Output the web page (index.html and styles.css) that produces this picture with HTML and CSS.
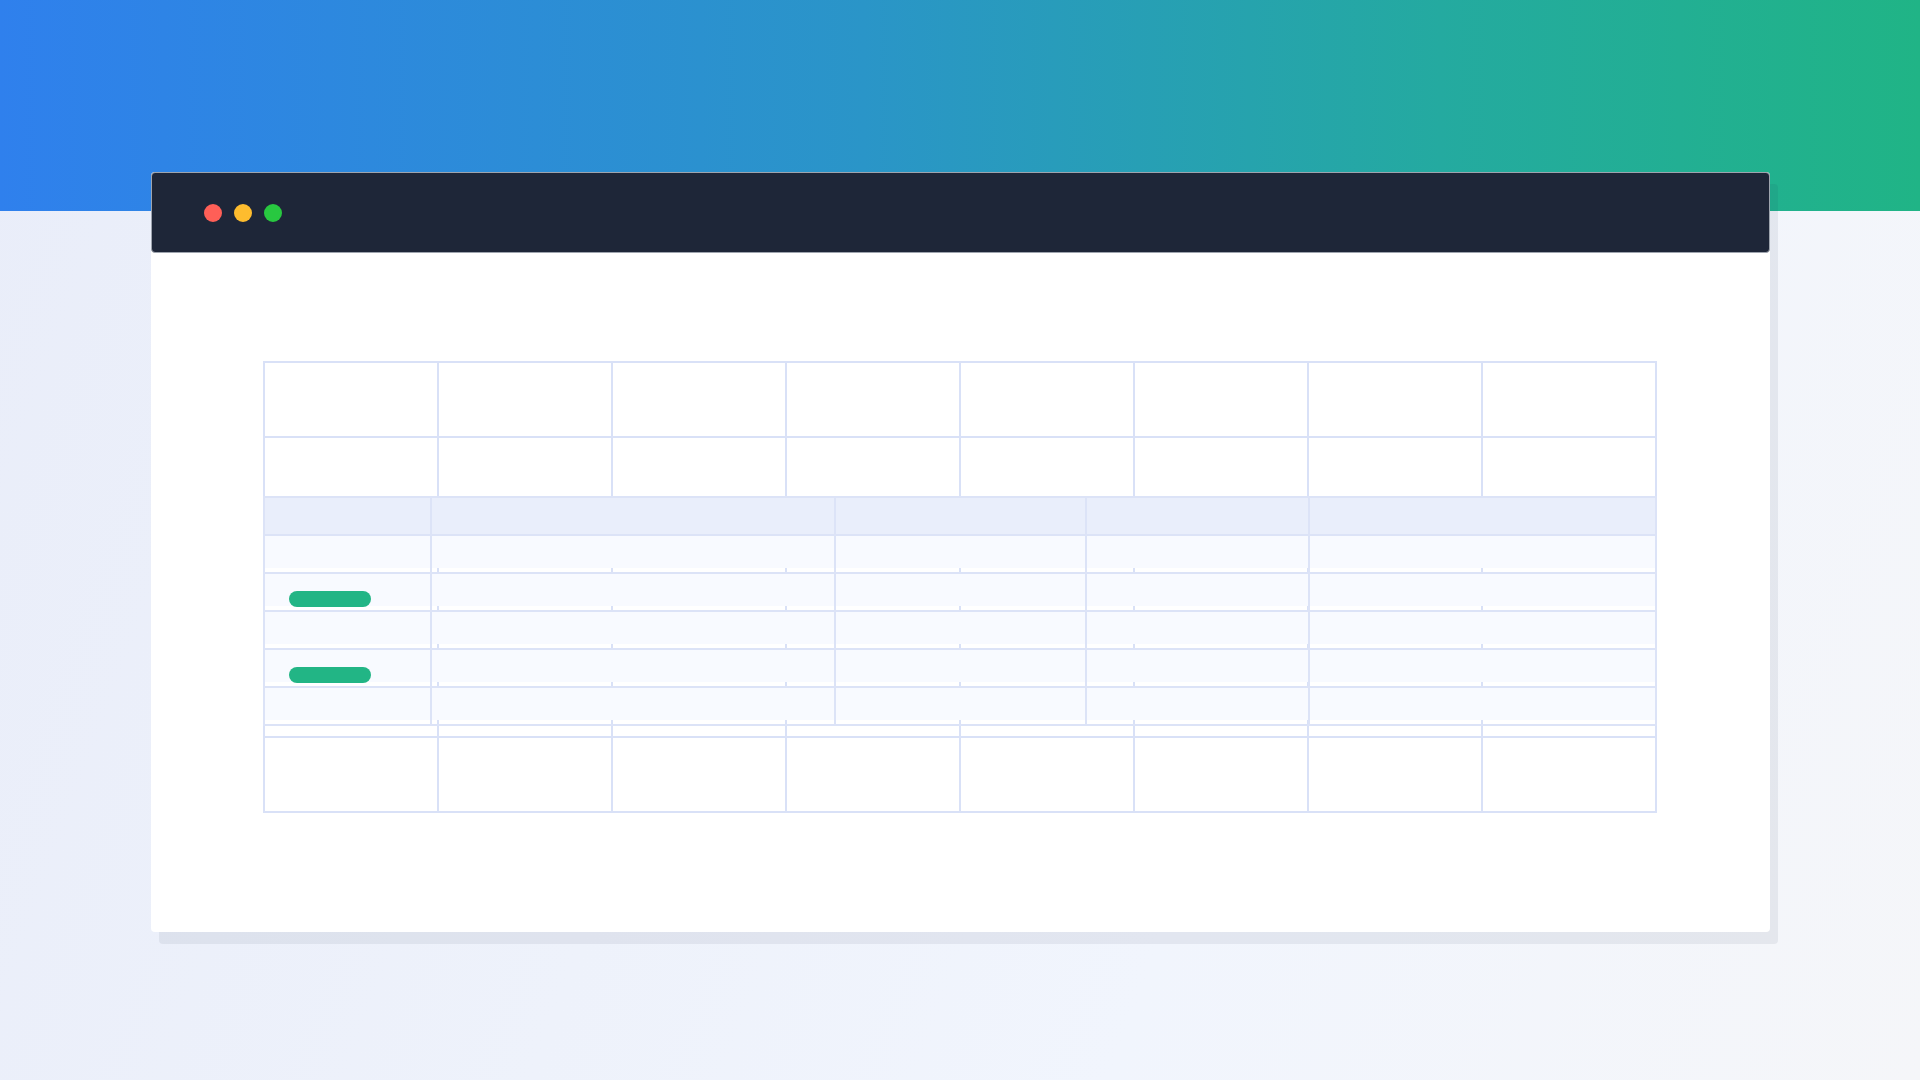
FILE: index.html
```html
<!DOCTYPE html>
<html lang="en">
<head>
    <meta charset="UTF-8">
    <meta name="viewport" content="width=device-width, initial-scale=1.0">
    <title>Sheet preview</title>
    <link rel="stylesheet" href="styles.css">
</head>
<body>
    <div class="stage">
        <div class="window">
            <div class="titlebar">
                <span class="dot dot-red"></span>
                <span class="dot dot-yellow"></span>
                <span class="dot dot-green"></span>
            </div>
            <div class="content">
                <div class="sheet">
                    <table class="grid">
                        <tbody>
                            <tr class="row-tall"><td></td><td></td><td></td><td></td><td></td><td></td><td></td><td></td></tr>
                            <tr><td></td><td></td><td></td><td></td><td></td><td></td><td></td><td></td></tr>
                            <tr><td></td><td></td><td></td><td></td><td></td><td></td><td></td><td></td></tr>
                            <tr><td></td><td></td><td></td><td></td><td></td><td></td><td></td><td></td></tr>
                            <tr><td></td><td></td><td></td><td></td><td></td><td></td><td></td><td></td></tr>
                            <tr><td></td><td></td><td></td><td></td><td></td><td></td><td></td><td></td></tr>
                            <tr class="row-tall"><td></td><td></td><td></td><td></td><td></td><td></td><td></td><td></td></tr>
                        </tbody>
                    </table>

                    <table class="overlay">
                        <colgroup>
                            <col class="col-a">
                            <col class="col-b">
                            <col class="col-c">
                            <col class="col-d">
                            <col class="col-e">
                        </colgroup>
                        <thead>
                            <tr><th></th><th></th><th></th><th></th><th></th></tr>
                        </thead>
                        <tbody>
                            <tr><td></td><td></td><td></td><td></td><td></td></tr>
                            <tr><td><span class="pill"></span></td><td></td><td></td><td></td><td></td></tr>
                            <tr><td></td><td></td><td></td><td></td><td></td></tr>
                            <tr><td><span class="pill"></span></td><td></td><td></td><td></td><td></td></tr>
                            <tr><td></td><td></td><td></td><td></td><td></td></tr>
                        </tbody>
                    </table>
                </div>
            </div>
        </div>
    </div>
</body>
</html>
```

FILE: styles.css
```css
html, body {
    margin: 0;
    padding: 0;
}
body {
    width: 1920px;
    height: 1080px;
    overflow: hidden;
    font-family: "Liberation Sans", Arial, sans-serif;
    background:
        linear-gradient(90deg, #2f80ed 0%, #2a95c8 45%, #24aaa0 75%, #20b486 100%) top left / 100% 211px no-repeat,
        linear-gradient(110deg, #e9edf9 0%, #eef2fb 40%, #f1f5fd 65%, #f5f6f9 100%);
}
.stage {
    padding: 172px 0 0 151px;
}
.window {
    width: 1619px;
    height: 760px;
    background-color: #ffffff;
    border-radius: 4px;
    box-shadow: 8px 12px 0 rgba(30, 41, 70, 0.07);
    display: flex;
    flex-direction: column;
}
.titlebar {
    box-sizing: border-box;
    height: 81px;
    background-color: #1e2638;
    border: 1px solid #9ea4ae;
    border-radius: 4px;
    display: flex;
    align-items: center;
    gap: 12px;
    padding-left: 52px;
}
.dot {
    width: 18px;
    height: 18px;
    border-radius: 50%;
}
.dot-red {
    background-color: #ff5f57;
}
.dot-yellow {
    background-color: #febc2e;
}
.dot-green {
    background-color: #28c840;
}
.content {
    padding: 108px 0 0 112px;
}
.sheet {
    position: relative;
    width: 1394px;
}
.grid {
    width: 1394px;
    table-layout: fixed;
    border-collapse: collapse;
    border: 2px solid #d9e1f7;
}
.grid td {
    border: 2px solid #d9e1f7;
    height: 58px;
    padding: 0;
}
.grid .row-tall td {
    height: 73px;
}
.overlay {
    position: absolute;
    top: 135px;
    left: 0;
    width: 1392px;
    table-layout: fixed;
    border-collapse: collapse;
    border: 2px solid #dce3f7;
}
.col-a { width: 167px; }
.col-b { width: 404px; }
.col-c { width: 251px; }
.col-d { width: 223px; }
.col-e { width: 347px; }
.overlay th,
.overlay td {
    border: 2px solid #dce3f7;
    height: 38px;
    padding: 0;
    box-sizing: border-box;
}
.overlay th {
    background-color: #e9eefb;
}
.overlay td {
    background: linear-gradient(#f8faff, #f8faff) top left / 100% calc(100% - 4px) no-repeat;
    vertical-align: top;
}
.pill {
    display: block;
    width: 82px;
    height: 16px;
    margin: 17px 0 0 24px;
    border-radius: 8px;
    background-color: #22b585;
}
```
